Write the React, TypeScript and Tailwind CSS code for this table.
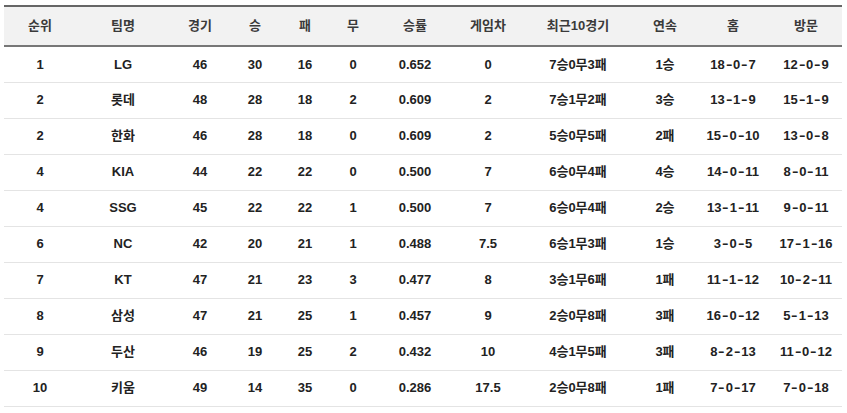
import React from 'react';

const headers = ['순위', '팀명', '경기', '승', '패', '무', '승률', '게임차', '최근10경기', '연속', '홈', '방문'];
const widths = [72, 94, 60, 50, 50, 46, 78, 68, 112, 62, 74, 72];

const rows = [
  ['1', 'LG', '46', '30', '16', '0', '0.652', '0', '7승0무3패', '1승', '18-0-7', '12-0-9'],
  ['2', '롯데', '48', '28', '18', '2', '0.609', '2', '7승1무2패', '3승', '13-1-9', '15-1-9'],
  ['2', '한화', '46', '28', '18', '0', '0.609', '2', '5승0무5패', '2패', '15-0-10', '13-0-8'],
  ['4', 'KIA', '44', '22', '22', '0', '0.500', '7', '6승0무4패', '4승', '14-0-11', '8-0-11'],
  ['4', 'SSG', '45', '22', '22', '1', '0.500', '7', '6승0무4패', '2승', '13-1-11', '9-0-11'],
  ['6', 'NC', '42', '20', '21', '1', '0.488', '7.5', '6승1무3패', '1승', '3-0-5', '17-1-16'],
  ['7', 'KT', '47', '21', '23', '3', '0.477', '8', '3승1무6패', '1패', '11-1-12', '10-2-11'],
  ['8', '삼성', '47', '21', '25', '1', '0.457', '9', '2승0무8패', '3패', '16-0-12', '5-1-13'],
  ['9', '두산', '46', '19', '25', '2', '0.432', '10', '4승1무5패', '3패', '8-2-13', '11-0-12'],
  ['10', '키움', '49', '14', '35', '0', '0.286', '17.5', '2승0무8패', '1패', '7-0-17', '7-0-18'],
];

// home / away records: the original font draws a longer dash
const Record = ({ value }: { value: string }) => (
  <>
    {value.split('-').map((part, i) => (
      <React.Fragment key={i}>
        {i > 0 && <span className="mx-[2px] inline-block scale-x-[1.5]">-</span>}
        {part}
      </React.Fragment>
    ))}
  </>
);

export default function App() {
  return (
    <div className="min-h-[413px] bg-white pl-1 pt-[5px] font-['Liberation_Sans','Noto_Sans_CJK_KR',sans-serif]">
      <table className="w-[838px] table-fixed border-collapse text-center text-[13px] font-bold">
        <colgroup>
          {widths.map((w, i) => (
            <col key={i} style={{ width: w }} />
          ))}
        </colgroup>
        <thead>
          <tr className="h-[40px] border-t-2 border-b-2 border-t-[#666] border-b-[#777] bg-[#f2f2f2] text-[#3a3a3a]">
            {headers.map((h) => (
              <th key={h} className="font-bold">{h}</th>
            ))}
          </tr>
        </thead>
        <tbody>
          {rows.map((row, i) => (
            <tr key={i} className="h-[36px] border-b border-[#e4e4e4] text-[#222]">
              {row.map((cell, j) => (
                <td key={j}>{j >= 10 ? <Record value={cell} /> : cell}</td>
              ))}
            </tr>
          ))}
        </tbody>
      </table>
    </div>
  );
}
